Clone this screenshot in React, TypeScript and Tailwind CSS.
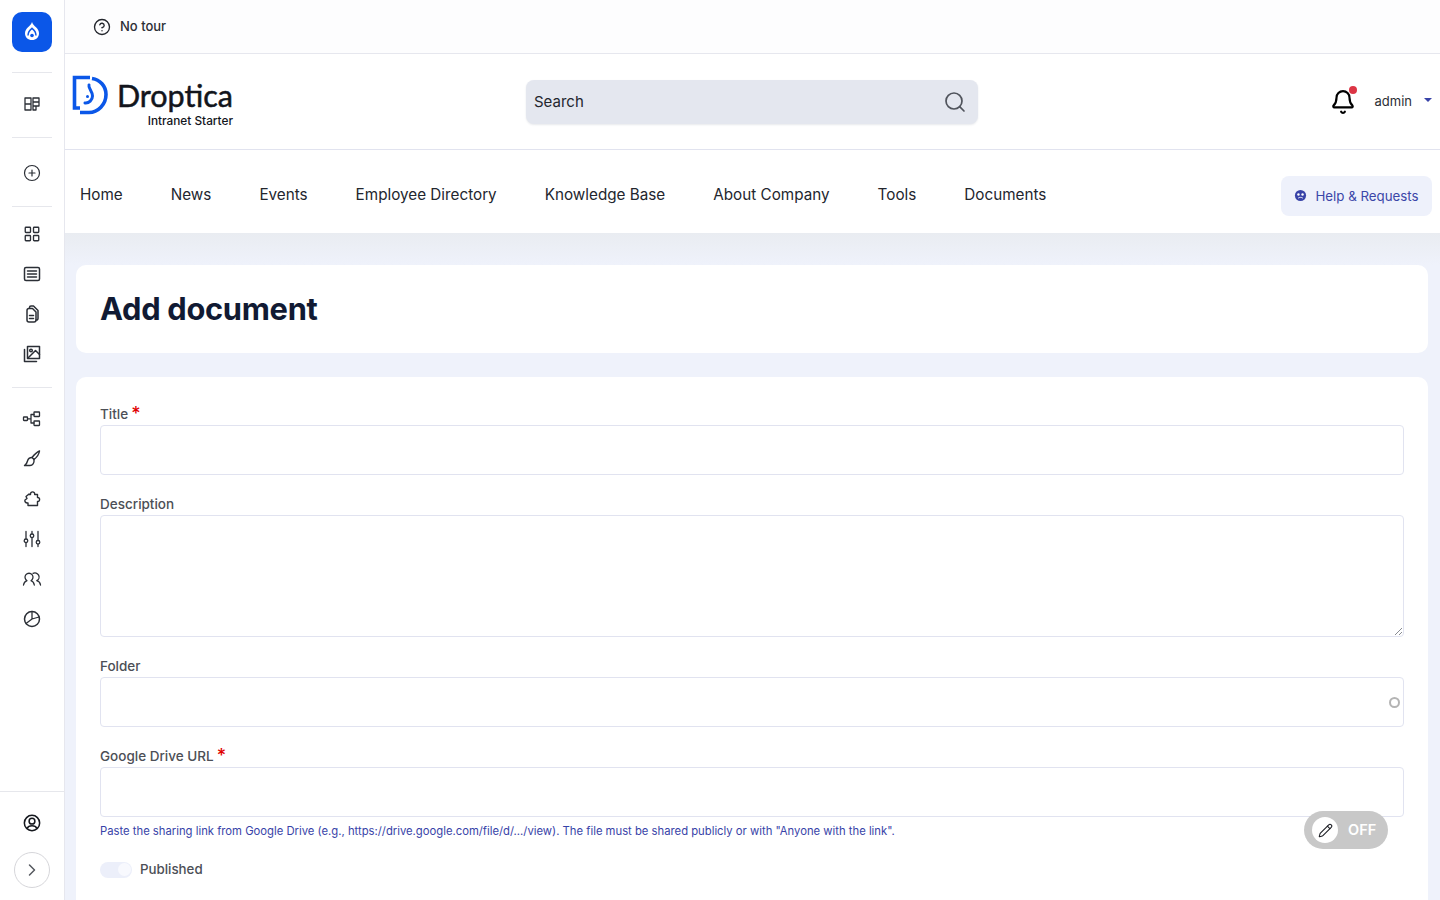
import type { ReactNode } from 'react';
import { Bell, ChevronRight, CircleHelp, CirclePlus, LayoutGrid, Pencil, Search } from 'lucide-react';

const navItems = ['Home', 'News', 'Events', 'Employee Directory', 'Knowledge Base', 'About Company', 'Tools', 'Documents'];

function Glyph({ children }: { children: ReactNode }) {
    return (
        <svg viewBox="0 0 20 20" fill="none" stroke="#2b2f36" strokeWidth="1.5" strokeLinecap="round" strokeLinejoin="round" className="w-5 h-5">
            {children}
        </svg>
    );
}

function SideItem({ children }: { children: ReactNode }) {
    return <div className="h-10 flex items-center justify-center">{children}</div>;
}

function Divider() {
    return <div className="mx-3 h-px bg-[#e6e7ec]" />;
}

function DrupalLogo() {
    return (
        <svg viewBox="0 0 24 24" className="w-6 h-6" fill="none">
            <path d="M12 2c.8 2.400 2.500 3.800 4 5.200 1.700 1.600 3 3.500 3 6 0 4-3 6.800-7 6.800s-7-2.800-7-6.800c0-2.500 1.300-4.400 3-6C9.500 5.800 11.200 4.400 12 2Z" fill="#fff" />
            <path d="M8 15.500c0-3.500 1.800-5.500 4-7.200 2.200 1.700 4 3.700 4 7.200" stroke="#0b57e8" strokeWidth="1.5" />
            <circle cx="12" cy="15.500" r="1.800" fill="#0b57e8" />
        </svg>
    );
}

function DropticaLogo() {
    return (
        <svg viewBox="0 0 36 40" className="w-9 h-10" fill="none" stroke="#0b57e8" strokeWidth="3.6">
            <path d="M18 2.500H2.500V33H8" />
            <path d="M20 3.500c8 1.200 14 7.500 14 16 0 10-8 18-17 18H8" />
            <path d="M17 10c-1 3 3.500 6 3.500 11 0 4-3.500 7.500-7.500 7" strokeWidth="3" strokeLinecap="round" />
            <circle cx="15.500" cy="21.500" r="1.500" fill="#0b57e8" stroke="none" />
        </svg>
    );
}

function Field({ label, required, children }: { label: string; required?: boolean; children: ReactNode }) {
    return (
        <div className="mb-5">
            <div className="h-5 pb-px flex items-end text-[13.5px] leading-[19px] font-medium text-[#4c4f56]">
                <span>{label}</span>
                {required && <span className="ml-[3px] self-start -mt-px text-[18px] leading-[19px] text-[#e00000]">*</span>}
            </div>
            {children}
        </div>
    );
}

export default function App() {
    return (
        <div className="flex h-screen overflow-hidden bg-white font-['Inter',sans-serif] text-[#20232b]">
            <aside className="w-[65px] shrink-0 border-r border-[#e6e7ee] bg-white flex flex-col">
                <div className="mx-3 mt-3 mb-5 w-10 h-10 rounded-[10px] bg-[#0b57e8] flex items-center justify-center">
                    <DrupalLogo />
                </div>
                <Divider />
                <div className="pt-[11px] pb-[13px]">
                    <SideItem>
                        <Glyph>
                            <path d="M3 4h6v12H3zM3 10h6M11 4h6v8h-6zM11 8h6M11 12h3v4h-3z" strokeWidth="1.3" />
                        </Glyph>
                    </SideItem>
                </div>
                <Divider />
                <div className="pt-[15px] pb-[13px]">
                    <SideItem><CirclePlus className="w-[18px] h-[18px] text-[#2b2f36]" strokeWidth={1.6} /></SideItem>
                </div>
                <Divider />
                <div className="pt-[7px] pb-[13px]">
                    <SideItem><LayoutGrid className="w-[18px] h-[18px] text-[#2b2f36]" strokeWidth={1.8} /></SideItem>
                    <SideItem>
                        <Glyph>
                            <rect x="2.5" y="3.5" width="15" height="13" rx="1.5" />
                            <path d="M5.500 7h9M5.500 10h9M5.500 13h9" />
                        </Glyph>
                    </SideItem>
                    <SideItem>
                        <Glyph>
                            <path d="M5 6.500a2 2 0 0 1 2-2h3.500L14 8v8a2 2 0 0 1-2 2H7a2 2 0 0 1-2-2V6.500Z" />
                            <path d="M7.500 4V3.500a1.500 1.500 0 0 1 1.500-1.500h2.500L16 6.500v8a1.500 1.500 0 0 1-2 1.500" />
                            <path d="M7.500 11.500h4M7.500 14.500h4" />
                        </Glyph>
                    </SideItem>
                    <SideItem>
                        <Glyph>
                            <rect x="5.5" y="2.500" width="12" height="12" />
                            <path d="M2.500 5.500v12h12M6 14l7.500-7.500 4 4" />
                            <circle cx="9" cy="6.500" r="1.300" />
                        </Glyph>
                    </SideItem>
                </div>
                <Divider />
                <div className="pt-[11px]">
                    <SideItem>
                        <Glyph>
                            <rect x="1.500" y="8" width="4" height="3.500" rx=".5" strokeWidth="1.3" />
                            <rect x="12" y="3" width="5.500" height="4.500" rx=".5" strokeWidth="1.3" />
                            <rect x="12" y="12" width="5.500" height="4.500" rx=".5" strokeWidth="1.3" />
                            <path d="M5.500 9.800h3.500M12 5.500H9v8.500h3" strokeWidth="1.3" />
                        </Glyph>
                    </SideItem>
                    <SideItem>
                        <Glyph>
                            <path d="M17.500 2c-2.500 1-5.500 4-7.500 6.500l2 2c2.500-2 5-5 5.500-8.500Z" strokeWidth="1.4" />
                            <path d="M10 8.500c-3 0-4 1.500-4.500 3.500-.3 1.500-1.500 3.500-3 4.500H8c2.500 0 4.500-2.500 4-6" strokeWidth="1.4" />
                        </Glyph>
                    </SideItem>
                    <SideItem>
                        <Glyph>
                            <path d="M7 5.500h1.500c-.3-3.500 4.500-3.500 4.200 0h2.800v3c2.800-.3 2.800 4.300 0 4v4H6v-2.500c-2.800.3-3.500-2-3-3l2-1.500-1-2 3-2.500Z" strokeWidth="1.4" />
                        </Glyph>
                    </SideItem>
                    <SideItem>
                        <Glyph>
                            <path d="M4 2.500v7M4 14v3.500M10 2.500v2M10 9v8.500M16 2.500v8.500M16 15.500v2" strokeWidth="1.3" />
                            <circle cx="4" cy="11.800" r="1.800" strokeWidth="1.3" />
                            <circle cx="10" cy="6.800" r="1.800" strokeWidth="1.3" />
                            <circle cx="16" cy="13.300" r="1.800" strokeWidth="1.3" />
                        </Glyph>
                    </SideItem>
                    <SideItem>
                        <Glyph>
                            <path d="M1.500 16c.4-2.600 2-3.800 3.500-4.300a4 4 0 1 1 4 0c1.500.5 2.800 1.600 3.300 4.300" strokeWidth="1.3" />
                            <path d="M11 4.300a4 4 0 0 1 3.800 7.400c1.700.5 3.300 1.700 3.700 4.300" strokeWidth="1.3" />
                        </Glyph>
                    </SideItem>
                    <SideItem>
                        <Glyph>
                            <circle cx="10" cy="10" r="7.500" />
                            <path d="M10 2.500V10l-6 4.500M10 10l7-2" strokeWidth="1.3" />
                        </Glyph>
                    </SideItem>
                </div>
                <div className="mt-auto border-t border-[#e6e7ec] pt-[11px] pb-3 flex flex-col items-center">
                    <div className="h-10 mb-[9px] flex items-center justify-center">
                        <svg viewBox="0 0 20 20" fill="none" stroke="#15181e" strokeWidth="1.7" className="w-[18px] h-[18px]">
                            <circle cx="10" cy="10" r="8.500" />
                            <circle cx="10" cy="8" r="3.200" />
                            <path d="M4.500 16c1-2.200 3-3 5.500-3s4.500.8 5.500 3" />
                        </svg>
                    </div>
                    <div className="w-9 h-9 rounded-full border border-[#d6d6da] flex items-center justify-center">
                        <ChevronRight className="w-5 h-5 text-[#55585f]" strokeWidth={1.8} />
                    </div>
                </div>
            </aside>

            <div className="flex-1 min-w-0 flex flex-col">
                <div className="h-[54px] shrink-0 border-b border-[#e6e7ee] bg-[#fdfdfe] pl-7 flex items-center">
                    <CircleHelp className="w-[18px] h-[18px] text-[#23262d]" strokeWidth={1.8} />
                    <span className="ml-[9px] text-[13px] font-medium text-[#2b2e35]">No tour</span>
                </div>

                <header className="h-[96px] shrink-0 border-b border-[#e1e3ef] bg-white flex items-center pl-[7px] pr-2">
                    <div className="w-[454px] shrink-0 flex items-start">
                        <DropticaLogo />
                        <div className="ml-[9px] flex flex-col items-end w-[116px]">
                            <span className="text-[30.5px] leading-[36px] mt-[2px] font-['Lato',sans-serif] [-webkit-text-stroke:0.5px_#12151c] text-[#12151c]">Droptica</span>
                            <span className="text-[11.8px] leading-[14px] mt-px font-medium text-[#12151c] whitespace-nowrap">Intranet Starter</span>
                        </div>
                    </div>
                    <div className="w-[452px] h-[44px] shrink-0 rounded-lg bg-[#e4e7ef] shadow-[0_1px_2px_rgba(60,70,100,0.12)] px-2 flex items-center justify-between">
                        <span className="text-[15px] pt-px text-[#23262e]">Search</span>
                        <Search className="w-6 h-6 mr-[3px] text-[#50545c]" strokeWidth={1.7} />
                    </div>
                    <div className="ml-auto flex items-center">
                        <div className="relative mr-[19px]">
                            <Bell className="w-[26px] h-[26px] text-black" strokeWidth={2} />
                            <span className="absolute -top-[3px] -right-[1px] w-2 h-2 rounded-full bg-[#dc3545]" />
                        </div>
                        <span className="text-[13px] pt-px text-[#2b2e35]">admin</span>
                        <span className="ml-3 mb-[3px] w-0 h-0 border-x-[4px] border-x-transparent border-t-[4px] border-t-[#3843a8]" />
                    </div>
                </header>

                <nav className="h-[83px] shrink-0 bg-white pl-[15px] pr-2 flex items-center">
                    <ul className="flex items-center gap-12 pt-2 text-[15.25px] text-[#23262e]">
                        {navItems.map(item => (
                            <li key={item} className="whitespace-nowrap">{item}</li>
                        ))}
                    </ul>
                    <div className="ml-auto mt-[9px] h-10 w-[151px] rounded-lg bg-[#eef1fb] flex items-center justify-center gap-2 text-[13.3px] text-[#3b46a8]">
                        <svg viewBox="0 0 14 14" className="w-[13px] h-[13px] -mt-px">
                            <circle cx="7" cy="7" r="6" fill="#3843a8" />
                            <circle cx="4.800" cy="6" r="1.300" fill="#fff" />
                            <circle cx="9.200" cy="6" r="1.300" fill="#fff" />
                            <path d="M4.500 9.800c1.500-1 3.500-1 5 0" stroke="#fff" fill="none" />
                        </svg>
                        <span className="pt-px">Help &amp; Requests</span>
                    </div>
                </nav>

                <main className="flex-1 min-h-0 overflow-hidden pl-[11px] pr-3 pt-8 bg-[linear-gradient(#e9ecf1,#eff2fb_32px)]">
                    <div className="h-[88px] rounded-[10px] bg-white px-6 flex items-center">
                        <h1 className="text-[30.85px] font-bold text-[#111a33] tracking-[-0.01em]">Add document</h1>
                    </div>
                    <div className="mt-6 rounded-t-[10px] bg-white px-6 pt-7 h-[600px]">
                        <Field label="Title" required>
                            <div className="h-[50px] rounded border border-[#e1e3f0] bg-white" />
                        </Field>
                        <Field label="Description">
                            <div className="relative h-[122px] rounded border border-[#e1e3f0] bg-white">
                                <svg viewBox="0 0 8 8" className="absolute right-px bottom-px w-2 h-2" stroke="#6b6e75" strokeWidth=".8">
                                    <path d="M1 8l7-7M5 8l3-3" />
                                </svg>
                            </div>
                        </Field>
                        <Field label="Folder">
                            <div className="h-[50px] rounded border border-[#e1e3f0] bg-white flex items-center justify-end pr-[3px]">
                                <span className="w-[11px] h-[11px] rounded-full border-2 border-[#b4b4b4]" />
                            </div>
                        </Field>
                        <Field label="Google Drive URL" required>
                            <div className="h-[50px] rounded border border-[#e1e3f0] bg-white" />
                            <p className="mt-[7px] text-[11.27px] leading-[14px] text-[#3843a8]">
                                Paste the sharing link from Google Drive (e.g., https://drive.google.com/file/d/.../view). The file must be shared publicly or with "Anyone with the link".
                            </p>
                        </Field>
                        <div className="flex items-center mt-[22px]">
                            <div className="w-8 h-4 rounded-full bg-[#eceffa] flex items-center justify-end pr-px">
                                <span className="w-[13px] h-[13px] rounded-full bg-[#f8f9fe]" />
                            </div>
                            <span className="ml-2 text-[13.3px] font-medium text-[#4c4f56]">Published</span>
                        </div>
                    </div>
                </main>
            </div>

            <div className="fixed left-[1304px] top-[811px] w-[84px] h-[38px] rounded-full bg-[#c8c8c8] flex items-center pl-2">
                <span className="w-[26px] h-[26px] rounded-full bg-white flex items-center justify-center">
                    <Pencil className="w-[15px] h-[15px] text-[#1c1e24]" strokeWidth={1.7} />
                </span>
                <span className="ml-[10px] pb-px text-[14.5px] font-semibold text-white">OFF</span>
            </div>
        </div>
    );
}
